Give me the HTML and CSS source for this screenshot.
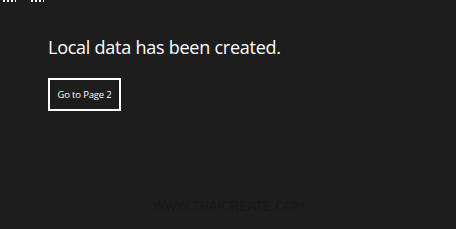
FILE: index.html
```html
<!DOCTYPE html>
<html>
    <head>
        <title>Local Data</title>
        <link rel="stylesheet" href="styles.css">
    </head>
    <body>
        <div class="top-marks">
            <span class="mark mark-one"></span>
            <span class="mark mark-two"></span>
        </div>
        <main class="page">
            <p class="title">Local data has been created.</p>
            <button class="page-button">Go to Page 2</button>
        </main>
        <p class="watermark">WWW.THAICREATE.COM</p>
    </body>
</html>
```

FILE: styles.css
```css
html, body {
    margin: 0;
    height: 100%;
}

body {
    background-color: #1d1d1d;
    color: white;
    font-family: "Open Sans", Arial, sans-serif;
    overflow: hidden;
}

.top-marks {
    display: flex;
    gap: 15px;
    height: 3px;
    padding-left: 3px;
}

.mark {
    height: 2px;
    background-image: repeating-linear-gradient(90deg, white 0 2px, transparent 2px 4px);
}

.mark-one {
    width: 13px;
}

.mark-two {
    width: 13px;
}

.page {
    padding: 31px 0 0 48px;
}

.title {
    margin: 0;
    font-size: 18px;
    line-height: 26px;
    letter-spacing: -0.25px;
}

.page-button {
    margin-top: 18px;
    width: 73px;
    height: 33px;
    background-color: #1d1d1d;
    color: white;
    border: 2px solid white;
    border-radius: 0;
    font-family: "Open Sans", Arial, sans-serif;
    font-size: 9.5px;
    font-weight: 500;
    letter-spacing: -0.15px;
    padding: 0;
}

.watermark {
    margin: 0;
    position: absolute;
    left: 153px;
    top: 197px;
    font-family: "Liberation Sans", Arial, sans-serif;
    font-size: 15px;
    color: #181818;
    transform: scaleX(0.85);
    transform-origin: left;
}
```
